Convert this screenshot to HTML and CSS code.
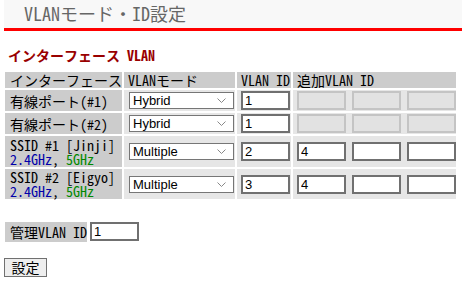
FILE: index.html
```html
<!DOCTYPE html>
<html lang="ja">
<head>
<meta charset="utf-8">
<title>VLANモード・ID設定</title>
<link rel="stylesheet" href="styles.css">
</head>
<body>
<div class="hdr"><h1 class="title">VLANモード・ID設定</h1></div>
<h2 class="sec">インターフェース VLAN</h2>
<table class="vt">
  <colgroup>
    <col class="c1"><col class="c2"><col class="c3"><col class="c4">
  </colgroup>
  <tr class="hrow">
    <th>インターフェース</th>
    <th>VLANモード</th>
    <th>VLAN ID</th>
    <th>追加VLAN ID</th>
  </tr>
  <tr class="r1">
    <th>有線ポート(#1)</th>
    <td class="sc"><select class="sel"><option>Hybrid</option></select></td>
    <td class="ic"><input class="in" type="text" value="1"></td>
    <td class="ic"><div class="adds"><input class="in" type="text" disabled><input class="in" type="text" disabled><input class="in" type="text" disabled></div></td>
  </tr>
  <tr class="r1">
    <th>有線ポート(#2)</th>
    <td class="sc"><select class="sel"><option>Hybrid</option></select></td>
    <td class="ic"><input class="in" type="text" value="1"></td>
    <td class="ic"><div class="adds"><input class="in" type="text" disabled><input class="in" type="text" disabled><input class="in" type="text" disabled></div></td>
  </tr>
  <tr class="r3">
    <th>SSID #1 [Jinji]<br><span class="b">2.4GHz</span>, <span class="g">5GHz</span></th>
    <td class="sc"><select class="sel"><option>Multiple</option></select></td>
    <td class="ic"><input class="in" type="text" value="2"></td>
    <td class="ic"><div class="adds"><input class="in" type="text" value="4"><input class="in" type="text"><input class="in" type="text"></div></td>
  </tr>
  <tr class="r4">
    <th>SSID #2 [Eigyo]<br><span class="b">2.4GHz</span>, <span class="g">5GHz</span></th>
    <td class="sc"><select class="sel"><option>Multiple</option></select></td>
    <td class="ic"><input class="in" type="text" value="3"></td>
    <td class="ic"><div class="adds"><input class="in" type="text" value="4"><input class="in" type="text"><input class="in" type="text"></div></td>
  </tr>
</table>
<div class="mgmt"><span class="lbl">管理VLAN ID</span><input class="in" type="text" value="1"></div>
<button class="btn" type="button">設定</button>
</body>
</html>
```

FILE: styles.css
```css
html, body {
  margin: 0;
  padding: 0;
  background: #ffffff;
}
body {
  font-family: "Noto Sans Mono CJK JP", "Noto Sans CJK JP", monospace;
  font-size: 14px;
  color: #000;
}
.hdr {
  margin: 0 8px 0 4px;
  height: 28px;
  background: #f8f8f8;
  border-bottom: 3px solid #ff0000;
  padding-left: 20px;
}
.title {
  margin: 0;
  font-size: 18px;
  font-weight: normal;
  line-height: 26px;
  color: #666666;
}
.sec {
  margin: 17px 0 8px 8px;
  font-size: 14px;
  line-height: 14px;
  font-weight: bold;
  color: #990000;
}
.vt {
  margin-left: 3px;
  border-collapse: separate;
  border-spacing: 2px;
  table-layout: fixed;
  width: 455px;
}
.c1 { width: 117px; }
.c2 { width: 111px; }
.c3 { width: 54px; }
.c4 { width: 163px; }
.vt th {
  background: #cccccc;
  font-weight: normal;
  text-align: left;
  padding: 0 0 0 5px;
  line-height: 14px;
  white-space: nowrap;
}
.vt td {
  background: #e6e6e6;
  padding: 0;
}
.hrow th { height: 16px; padding-left: 5px; }
.hrow th + th { padding-left: 4px; }
.r1 th, .r1 td { height: 21px; }
.r3 th, .r3 td { height: 31px; }
.r4 th, .r4 td { height: 30px; }
.b { color: #0000aa; }
.g { color: #008800; }
.sc { padding-left: 5px !important; }
.ic { padding-left: 4px !important; }
.sel {
  display: block;
  box-sizing: border-box;
  width: 105px;
  height: 17px;
  margin: 0;
  padding: 0 0 0 3px;
  border: 1px solid #767676;
  border-radius: 0;
  background: #ffffff url("data:image/svg+xml,%3Csvg xmlns='http://www.w3.org/2000/svg' width='9' height='5'%3E%3Cpath d='M0.5 0.5 L4.5 4.5 L8.5 0.5' fill='none' stroke='%23888' stroke-width='1'/%3E%3C/svg%3E") no-repeat right 7px center;
  appearance: none;
  -webkit-appearance: none;
  font-family: "Liberation Sans", Arial, sans-serif;
  font-size: 13px;
  line-height: 15px;
  color: #000;
}
.in {
  display: block;
  box-sizing: border-box;
  width: 49px;
  height: 19px;
  margin: 0;
  padding: 0 0 0 2px;
  border: 2px solid #707070;
  border-radius: 0;
  background: #ffffff;
  font-family: "Liberation Sans", Arial, sans-serif;
  font-size: 13px;
  color: #000;
  outline: none;
}
.in:disabled {
  background: #e2e2e2;
  border-color: #c4c4c4;
}
.adds {
  display: flex;
  gap: 6px;
}
.mgmt {
  display: flex;
  align-items: flex-start;
  gap: 3px;
  margin: 21px 0 0 5px;
}
.lbl {
  box-sizing: border-box;
  width: 82px;
  height: 20px;
  padding-left: 5px;
  background: #cccccc;
  line-height: 20px;
  white-space: nowrap;
}
.btn {
  display: block;
  box-sizing: border-box;
  margin: 16px 0 0 4px;
  width: 43px;
  height: 19px;
  padding: 0;
  border: 1px solid #707070;
  border-radius: 0;
  background: #eeeeee;
  font-family: "Noto Sans Mono CJK JP", "Noto Sans CJK JP", monospace;
  font-size: 14px;
  line-height: 17px;
  color: #000;
}
```
